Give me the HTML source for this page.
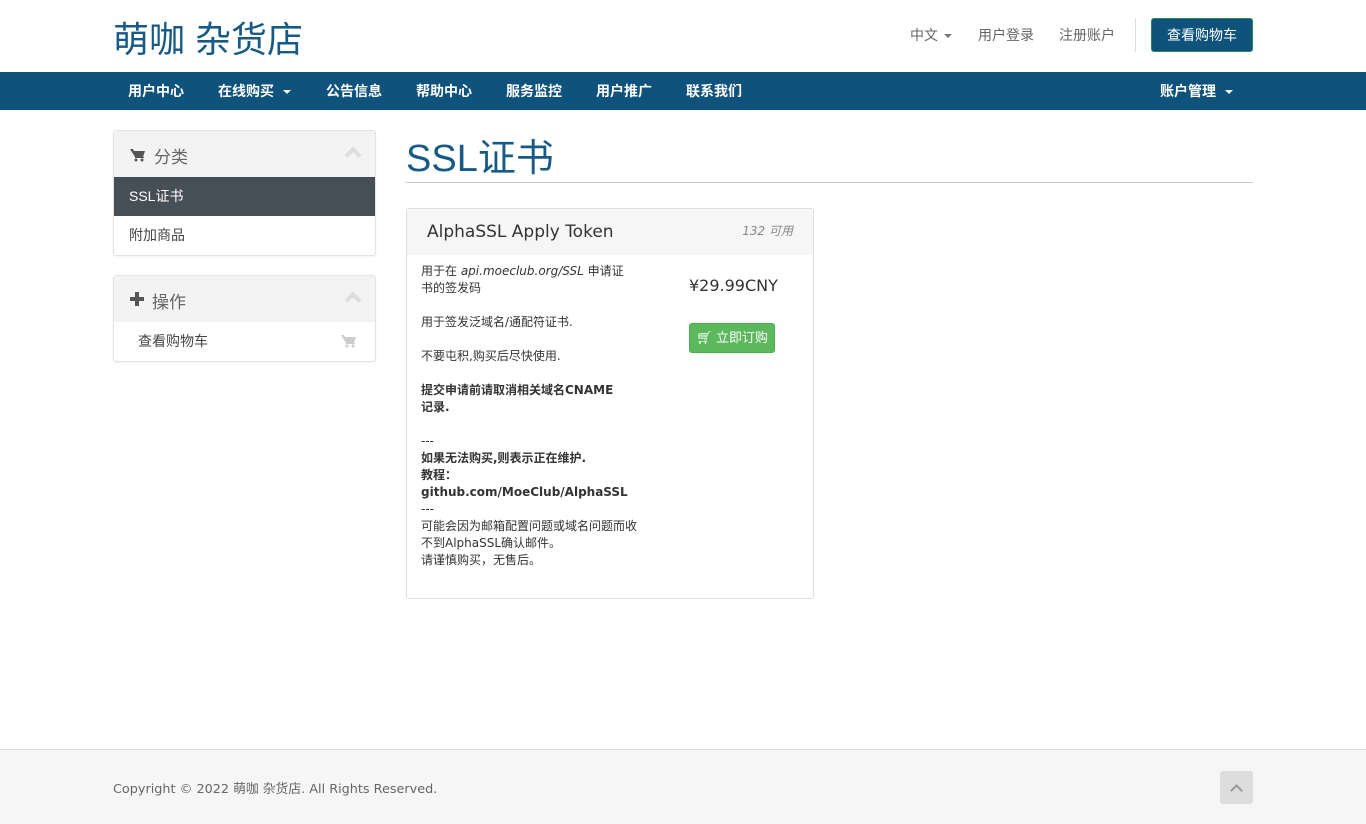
<!DOCTYPE html>
<html><head><meta charset="utf-8"><style>
*{box-sizing:border-box;margin:0;padding:0}
body{width:1366px;height:824px;background:#fff;font-family:"DejaVu Sans","Liberation Sans","Noto Sans CJK SC",sans-serif;color:#333;position:relative;overflow:hidden}
.hdr{height:72px;position:relative}
.logo{position:absolute;left:113px;top:11px;font-size:36px;color:#175a85;font-family:"Liberation Sans","Noto Sans CJK SC",sans-serif}
.tnav{position:absolute;top:25px;font-size:14px;color:#666;font-family:"Liberation Sans","Noto Sans CJK SC",sans-serif}
.caret{display:inline-block;border-top:4px solid #777;border-left:4px solid transparent;border-right:4px solid transparent;vertical-align:middle;margin-left:6px}
.cartbtn{position:absolute;left:1151px;top:18px;width:102px;height:34px;background:#0f527c;border:1px solid #2e8b57;border-radius:3px;color:#fff;font-size:14px;text-align:center;line-height:32px;font-family:"Liberation Sans","Noto Sans CJK SC",sans-serif}
.sep{position:absolute;left:1135px;top:18px;width:1px;height:34px;background:#ddd}
.nav{position:absolute;top:72px;left:0;width:1366px;height:38px;background:#0f527c}
.nav span{position:absolute;top:9px;color:#fff;font-size:14px;font-weight:bold;font-family:"Liberation Sans","Noto Sans CJK SC",sans-serif}
.nav .caret{border-top-color:#fff}
.panel{position:absolute;left:113px;width:263px;border:1px solid #e3e3e3;border-radius:3px;background:#fff;box-shadow:0 1px 2px rgba(0,0,0,.05)}
.ph{height:46px;background:#f3f3f3;position:relative;font-size:17px;color:#666}
.ph .t{position:absolute;left:40px;top:12px;font-family:"Liberation Sans","Noto Sans CJK SC",sans-serif}
.chev{position:absolute;right:16px;top:18px;width:12px;height:12px;border-left:4px solid #ddd;border-top:4px solid #ddd;transform:rotate(45deg)}
.it{height:39px;font-size:14px;line-height:39px;padding-left:15px;font-family:"Liberation Sans","Noto Sans CJK SC",sans-serif;color:#444}
h1{position:absolute;left:406px;top:127px;font-size:38px;font-weight:normal;color:#175a85;font-family:"Liberation Sans","Noto Sans CJK SC",sans-serif}
.hr{position:absolute;left:406px;top:182px;width:847px;height:1px;background:#ccc}
.prod{position:absolute;left:406px;top:208px;width:408px;height:391px;border:1px solid #ddd;border-radius:3px}
.prh{height:46px;background:#f6f6f6;position:relative}
.prh .n{position:absolute;left:20px;top:13px;font-size:17px;color:#333}
.prh .q{position:absolute;right:20px;top:13px;font-size:12px;color:#888;font-style:italic}
.desc{position:absolute;left:14px;top:54px;width:250px;font-size:12px;line-height:17px;color:#333;white-space:nowrap}
.price{position:absolute;left:282px;top:67px;font-size:16px;color:#333}
.buy{position:absolute;left:282px;top:114px;width:86px;height:30px;background:#5cb85c;border:1px solid #4cae4c;border-radius:3px;color:#fff;font-size:13px;line-height:28px;text-align:center;font-family:"Liberation Sans","Noto Sans CJK SC",sans-serif}
.foot{position:absolute;left:0;top:749px;width:1366px;height:75px;background:#f6f6f6;border-top:1px solid #ddd}
.foot .c{position:absolute;left:113px;top:28px;font-size:12.8px;color:#666}
.up{position:absolute;left:1220px;top:21px;width:33px;height:33px;background:#ddd;border-radius:3px}
.up:after{content:"";position:absolute;left:12px;top:15px;width:7px;height:7px;border-left:2px solid #999;border-top:2px solid #999;transform:rotate(45deg)}
</style></head><body>
<div class="hdr">
<div class="logo">萌咖 杂货店</div>
<div class="tnav" style="left:910px">中文<span class="caret"></span></div>
<div class="tnav" style="left:978px">用户登录</div>
<div class="tnav" style="left:1059px">注册账户</div>
<div class="sep"></div>
<div class="cartbtn">查看购物车</div>
</div>
<div class="nav">
<span style="left:128px">用户中心</span>
<span style="left:218px">在线购买<i class="caret" style="margin-left:9px"></i></span>
<span style="left:326px">公告信息</span>
<span style="left:416px">帮助中心</span>
<span style="left:506px">服务监控</span>
<span style="left:596px">用户推广</span>
<span style="left:686px">联系我们</span>
<span style="left:1160px">账户管理<i class="caret" style="margin-left:9px"></i></span>
</div>
<div class="panel" style="top:130px">
<div class="ph"><svg style="position:absolute;left:16px;top:17px" width="16" height="14" viewBox="0 0 16 14"><path d="M0 1h3l1 2h11l-2 6H5z M5 9h9v1H5z" fill="#555"/><circle cx="6" cy="12" r="1.5" fill="#555"/><circle cx="12" cy="12" r="1.5" fill="#555"/></svg><span class="t">分类</span><i class="chev"></i></div>
<div class="it" style="background:#474f56;color:#fff">SSL证书</div>
<div class="it">附加商品</div>
</div>
<div class="panel" style="top:275px">
<div class="ph"><svg style="position:absolute;left:16px;top:16px" width="14" height="14"><path d="M5 0h4v5h5v4H9v5H5V9H0V5h5z" fill="#555"/></svg><span class="t" style="left:38px">操作</span><i class="chev"></i></div>
<div class="it" style="padding-left:24px;position:relative">查看购物车<svg style="position:absolute;right:18px;top:12px" width="16" height="14" viewBox="0 0 16 14"><path d="M0 1h3l1 2h11l-2 6H5z M5 9h9v1H5z" fill="#ccc"/><circle cx="6" cy="12" r="1.5" fill="#ccc"/><circle cx="12" cy="12" r="1.5" fill="#ccc"/></svg></div>
</div>
<h1>SSL证书</h1>
<div class="hr"></div>
<div class="prod">
<div class="prh"><span class="n">AlphaSSL Apply Token</span><span class="q">132 可用</span></div>
<div class="desc">用于在 <i>api.moeclub.org/SSL</i> 申请证<br>书的签发码<br><br>用于签发泛域名/通配符证书.<br><br>不要屯积,购买后尽快使用.<br><br><b>提交申请前请取消相关域名CNAME<br>记录.</b><br><br>---<br><b>如果无法购买,则表示正在维护.<br>教程：<br>github.com/MoeClub/AlphaSSL</b><br>---<br>可能会因为邮箱配置问题或域名问题而收<br>不到AlphaSSL确认邮件。<br>请谨慎购买，无售后。</div>
<div class="price">¥29.99CNY</div>
<div class="buy">🛒︎ 立即订购</div>
</div>
<div class="foot"><div class="c">Copyright © 2022 萌咖 杂货店. All Rights Reserved.</div><div class="up"></div></div>
</body></html>
